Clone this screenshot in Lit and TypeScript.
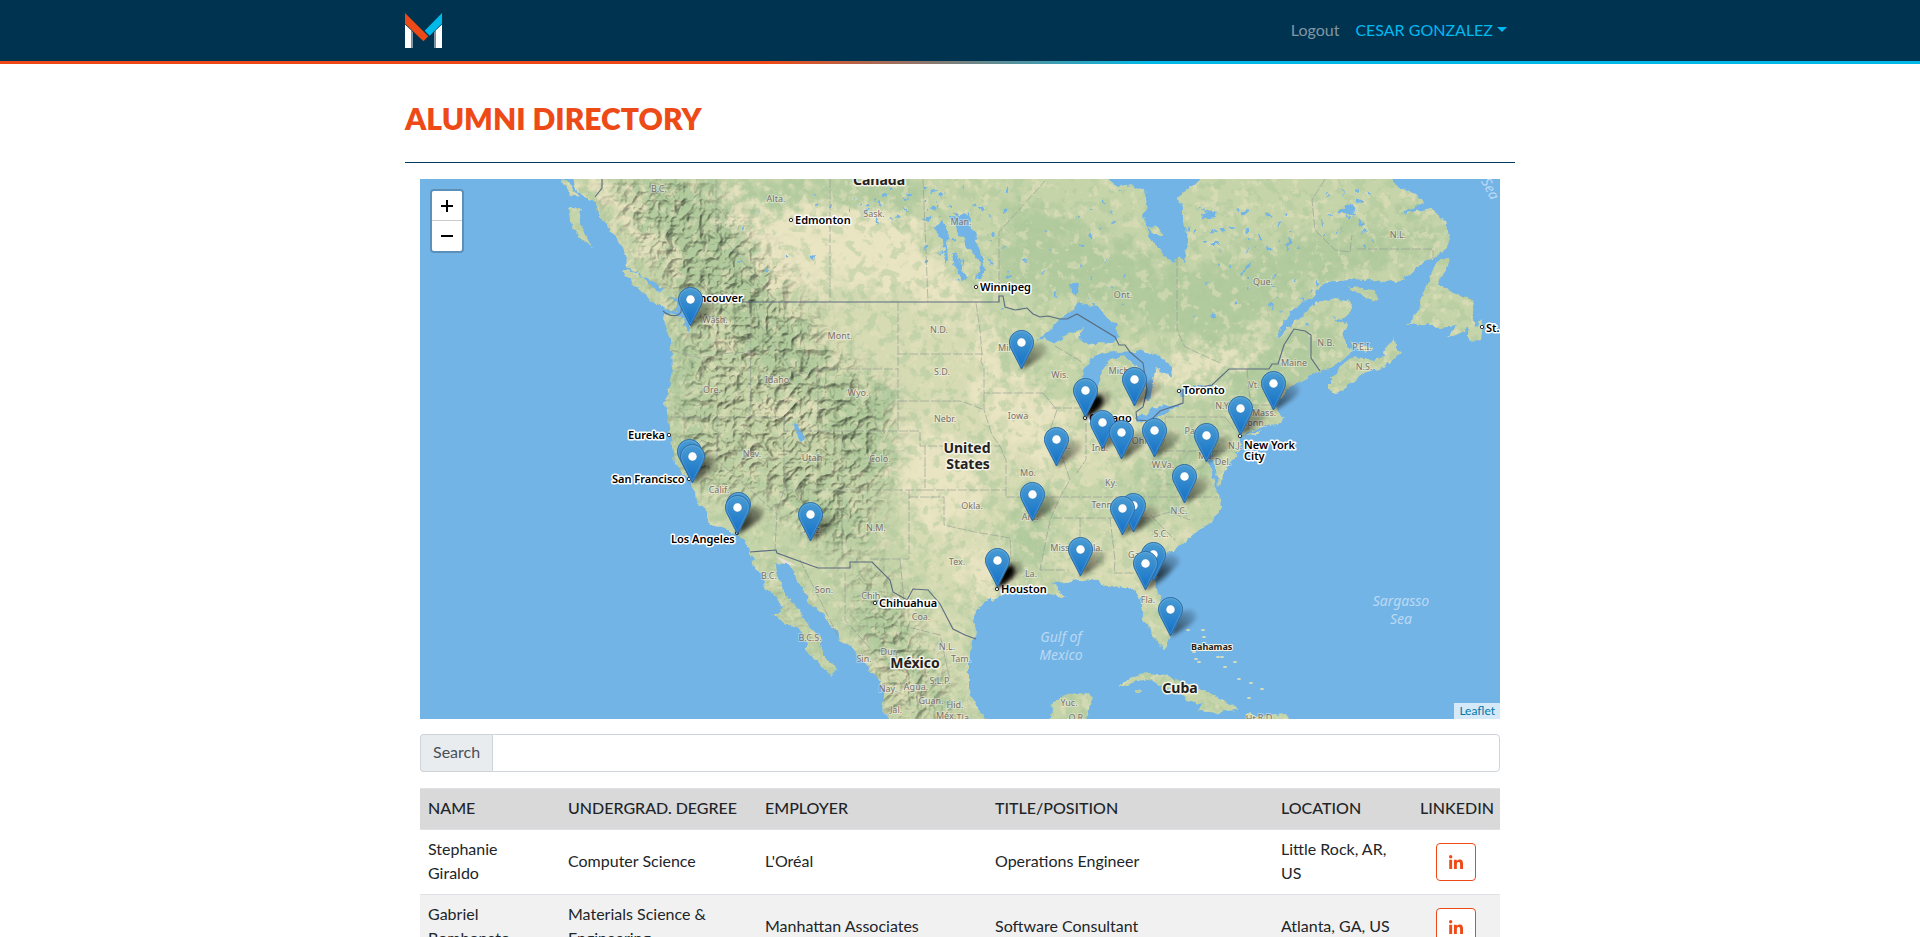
import { LitElement, html, svg, css } from "lit";
import { customElement, state } from "lit/decorators.js";

type Point = [number, number];

/* Coastlines, in map units. */
const MAINLAND =
  "M570 170 L574 186 580 196 588 198 595 204 597 212 605 222 610 231 618 238 623 249 627 258 628 267 643 277 651 281 658 284 663 293 672 296 677 299 684 302 690 312 690 326 687 334 685 322 680 317 664 313 665 327 670 338 671 350 672 370 669 387 665 403 668 420 670 436 673 447 675 463 683 473 689 480 691 486 696 493 697 502 707 513 710 525 725 528 733 533 742 538 748 547 750 553 755 567 763 578 765 588 777 597 783 607 782 613 773 614 782 622 792 627 795 624 800 630 807 643 807 652 815 658 823 668 830 676 837 671 834 665 827 660 822 650 820 637 810 627 800 613 795 603 787 597 782 588 777 573 776 564 787 565 795 570 797 580 805 593 808 602 823 613 827 622 838 630 839 638 850 647 863 662 878 678 885 693 882 707 890 725 990 725 984 716 975 703 969 687 969 663 972 640 976 630 973 622 975 612 983 603 997 598 1007 592 1023 590 1035 589 1047 593 1060 597 1067 597 1057 590 1053 583 1067 582 1080 580 1097 581 1108 587 1117 589 1127 585 1135 592 1141 603 1142 617 1147 627 1157 643 1165 648 1169 643 1170 633 1163 617 1160 597 1155 580 1158 566 1164 555 1177 548 1193 535 1203 527 1213 522 1216 515 1222 507 1220 497 1215 487 1212 473 1208 462 1212 452 1216 470 1218 487 1224 474 1229 466 1233 458 1240 450 1240 437 1250 432 1265 425 1278 424 1286 419 1280 415 1276 409 1278 402 1284 396 1287 390 1300 382 1317 372 1330 368 1342 361 1351 352 1347 344 1343 337 1347 323 1340 322 1332 317 1343 319 1350 313 1351 306 1347 301 1337 298 1317 303 1297 320 1277 338 1282 324 1290 313 1303 302 1313 296 1318 288 1327 282 1350 280 1385 282 1402 280 1417 267 1433 258 1447 248 1449 235 1446 221 1437 214 1430 208 1402 214 1425 202 1416 194 1404 190 1395 184 1390 170 1210 170 1198 182 1177 197 1183 208 1183 222 1188 240 1185 263 1180 257 1172 263 1157 246 1150 238 1144 216 1147 206 1145 190 1130 184 1117 187 1106 178 1100 170 Z";

const ISLANDS = [
  "M622 272 L628 269 643 278 655 289 667 293 677 303 677 312 665 309 650 299 637 288Z",
  "M568 208 L583 209 580 217 582 228 592 248 577 233 570 220Z",
  "M561 180 L569 182 575 192 579 197 570 194Z",
  "M580 180 L588 182 590 192 583 188Z",
  "M1330 378 L1345 362 1356 357 1372 359 1384 357 1383 351 1390 343 1395 337 1396 348 1401 353 1392 361 1383 368 1363 373 1350 384 1337 393 1330 390Z",
  "M1349 339 L1354 343 1365 345 1375 348 1367 352 1357 349Z",
  "M1347 287 L1363 288 1375 293 1380 301 1370 299 1356 293Z",
  "M1450 257 L1440 258 1430 275 1427 285 1420 300 1417 311 1407 325 1425 324 1440 327 1457 325 1447 337 1465 331 1468 326 1468 340 1474 342 1480 340 1483 320 1476 326 1472 317 1475 303 1467 297 1450 292 1438 285 1441 276 1448 267Z",
  "M1117 688 L1130 678 1147 673 1167 675 1183 684 1200 689 1217 696 1238 709 1220 713 1198 711 1202 704 1187 700 1176 691 1163 687 1150 680 1133 683Z",
  "M1134 690 L1143 690 1141 693 1136 693Z",
  "M1050 725 L1053 702 1067 695 1090 693 1093 698 1089 708 1087 725Z",
  "M1246 714 L1262 716 1286 714 1290 725 1246 725Z",
  "M1242 437 L1262 430 1258 434Z",
  "M1147 228 L1155 227 1163 233 1162 236 1153 233Z",
];

const BAHAMAS: Point[] = [
  [1188, 630], [1203, 630], [1204, 637], [1194, 652], [1196, 659], [1199, 662], [1222, 657],
  [1225, 667], [1235, 662], [1239, 679], [1251, 683], [1249, 698], [1262, 689], [1218, 657],
];

const LAKES = [
  "M1035 342 L1048 332 1067 313 1078 304 1098 307 1106 318 1115 323 1118 337 1113 343 1097 342 1090 345 1078 337 1083 328 1067 336 1053 342 1045 338Z",
  "M1082 378 L1083 370 1090 360 1100 354 1115 352 1128 356 1118 357 1108 362 1102 371 1098 387 1096 402 1088 407 1083 398Z",
  "M1117 352 L1135 351 1160 355 1172 367 1173 378 1163 371 1156 368 1152 383 1149 400 1143 398 1147 383 1142 370 1127 358Z",
  "M1137 422 L1136 416 1145 416 1153 408 1183 403 1170 411 1150 421Z",
  "M1176 391 L1183 387 1198 385 1212 386 1207 392 1190 394 1183 397Z",
  "M948 217 L967 214 970 228 976 232 978 247 983 260 985 270 982 278 978 278 981 264 974 252 967 247 962 237 957 232 956 223Z",
  "M933 228 L942 222 948 230 947 245 948 260 945 264 943 240Z",
  "M952 253 L958 257 961 267 967 278 962 281 958 270 953 263Z",
  "M792 424 L798 425 801 431 804 438 800 441 796 433Z",
  "M1070 284 L1076 280 1080 286 1078 294 1071 293Z",
  "M1241 275 L1247 264 1253 261 1246 270 1242 277Z",
  "M1338 212 L1346 206 1353 203 1357 212 1350 214 1342 213Z",
  "M1201 214 L1212 208 1218 213 1210 219 1202 219Z",
  "M716 577 L720 574 722 580 717 583Z",
];

const BORDERS = [
  "M690 302 L999 302 999 296 1003 296 1005 307 1015 310 1027 308 1033 314 1040 317 1048 316 1060 319 1067 319 1077 314 1115 337 1119 345 1125 345 1130 352 1143 363 1147 390 1143 407 1136 412 1137 420 1150 421 1160 411 1183 403 1183 390 1212 385 1229 369 1269 369 1272 364 1278 364 1284 345 1294 329 1305 331 1311 335 1311 358 1320 371",
  "M663 311 C670 317 678 317 681 312 L682 302",
  "M750 552 L776 550 777 553 818 568 850 568 850 562 872 562 890 580 893 592 907 600 913 589 928 590 940 604 953 629 965 635 976 639",
  "M602 179 L602 188 595 197",
];

const STATE_LINES =
  "M898 302V431M898 354H983M976 303L980 330 982 354 981 362 984 368V393H1043M898 401H960L975 406 984 410M984 393L984 410 992 435 1000 446 1006 460V497M818 369V431H920V446H1000M818 369H898M842 431V559M784 490H925M842 497M671 417H784V490M784 490L777 512 775 550M717 417V460L778 515M751 303V320L750 417M671 350L700 358 730 353 751 352M755 302L760 325 785 360 795 375 818 370M784 417V431H818M925 446V490H1006M909 490V559H869M909 497H944V525L975 532 1010 538 1012 580M1006 497H1060M1060 497H1218M1053 518H1150L1170 512 1190 520M1043 393L1057 410 1050 430 1060 450 1070 480 1060 497 1050 520 1045 545 1040 570H1068M1080 518V577M1110 518L1115 560 1114 573H1155M1052 408H1080M1086 412V460L1075 475M1118 428V455M1165 417H1225M1165 451H1225M1165 417V440L1150 465M1247 369L1250 400 1248 430M1250 405H1275M1225 417L1235 430M1150 515L1175 540M716 179V230L775 300M830 179V302M923 179L928 302M999 302V232L1045 181M1177 257V330L1185 347 1220 363M1357 249H1433V258M1055 346L1082 362M1325 179L1312 200 1315 230 1335 250 1350 252 1352 235M800 560L840 640M900 625L940 635 950 680M845 572V620L880 660M900 560L905 610";

const FOREST = [
  "640,179 716,179 790,300 730,310 690,300 640,250",
  "720,302 800,320 830,400 770,380 730,340",
  "1010,200 1180,270 1290,240 1430,215 1440,245 1300,290 1220,350 1130,320 1060,290 1000,290",
  "1280,330 1330,320 1340,360 1240,420 1220,380",
  "1130,500 1200,430 1230,400 1200,470 1140,520",
  "675,330 700,320 700,480 685,470",
  "835,430 890,440 885,480 845,480",
  "1020,500 1050,480 1050,560 1010,560",
  "830,380 895,390 890,430 830,430",
  "785,470 860,520 860,550 800,510",
  "870,590 960,700 930,700 850,620",
  "1070,700 1090,695 1085,719 1065,719",
  "740,179 920,179 920,215 830,195 760,215",
];
const DRY = [
  "770,215 830,205 905,215 960,290 990,330 1010,380 1060,410 1075,460 1010,450 980,400 970,320 900,290 790,290",
  "885,430 960,440 985,490 940,540 910,500 900,460",
  "700,330 745,340 730,360 700,350",
  "745,400 800,400 815,420 780,420",
  "695,490 735,520 715,510",
  "1150,370 1230,350 1290,330 1240,370 1180,385 1130,410",
  "575,180 610,180 680,270 665,275",
  "965,540 1010,560 985,600 970,600",
  "1140,610 1165,640 1150,630",
  "770,210 710,190 780,300 800,300",
];
const STEPPE = [
  "785,300 980,300 990,500 1020,560 940,600 900,540 890,400 800,360",
  "990,400 1140,400 1150,450 1060,500 1000,500",
  "1040,540 1200,520 1150,600 1060,590",
  "840,640 960,600 970,700 900,719",
];
const MOUNTAINS = [
  "600,179 700,179 800,300 830,350 890,400 880,480 860,560 820,540 760,490 700,490 680,430 690,330",
  "850,570 880,570 960,719 890,719",
  "1150,500 1210,430 1230,410 1170,490",
  "760,550 800,610 830,670 790,620",
];

/* Regional labels: [text, x, y] with x at the text's centre. */
const REGIONS: [string, number, number][] = [
  ["B.C.", 659, 192], ["Alta.", 776, 202], ["Sask.", 874, 217], ["Man.", 961, 225], ["Ont.", 1123, 298],
  ["Que.", 1263, 285], ["N.L.", 1398, 238], ["N.B.", 1326, 346], ["P.E.I.", 1362, 350], ["N.S.", 1364, 370],
  ["Maine", 1294, 366], ["Vt.", 1254, 388], ["N.Y.", 1223, 409], ["Mass.", 1264, 416], ["Conn.", 1254, 426],
  ["N.J.", 1235, 449], ["Pa.", 1191, 434], ["Del.", 1223, 465], ["Md.", 1206, 459], ["Wash.", 715, 323],
  ["Ore.", 712, 393], ["Idaho", 777, 383], ["Mont.", 840, 339], ["N.D.", 939, 333], ["S.D.", 942, 375],
  ["Wyo.", 858, 396], ["Nebr.", 945, 422], ["Iowa", 1018, 419], ["Minn.", 1010, 351], ["Wis.", 1060, 378],
  ["Mich.", 1120, 374], ["Ill.", 1065, 449], ["Ind.", 1100, 451], ["Ohio", 1142, 444], ["W.Va.", 1163, 468],
  ["Nev.", 752, 457], ["Utah", 812, 461], ["Colo.", 880, 462], ["Mo.", 1028, 476], ["Ky.", 1111, 486],
  ["Calif.", 719, 493], ["Ariz.", 813, 533], ["N.M.", 876, 531], ["Okla.", 972, 509], ["Ark.", 1030, 520],
  ["Tenn.", 1103, 508], ["N.C.", 1179, 514], ["S.C.", 1161, 537], ["Miss.", 1061, 551], ["Ala.", 1095, 551],
  ["Ga.", 1135, 558], ["Tex.", 957, 565], ["La.", 1031, 577], ["Fla.", 1148, 603], ["B.C.", 769, 579],
  ["Son.", 824, 593], ["Chih.", 872, 599], ["Coa.", 921, 620], ["B.C.S.", 810, 641], ["Sin.", 864, 662],
  ["Dur.", 889, 655], ["N.L.", 947, 650], ["Tam.", 961, 662], ["Nay.", 888, 692], ["Agua.", 916, 690],
  ["S.L.P.", 940, 684], ["Guan.", 931, 704], ["Hid.", 955, 708], ["Jal.", 896, 713], ["Méx.", 946, 719],
  ["Tla.", 964, 721], ["Yuc.", 1069, 706], ["Q.R.", 1077, 721], ["Ht.", 1252, 722], ["R.D.", 1266, 721],
];

/* Cities: [text, x, y, dot x, dot y] with x at the text's left edge. */
const CITIES: [string, number, number, number, number][] = [
  ["Edmonton", 795, 224, 791, 220], ["Winnipeg", 980, 291, 976, 287], ["Vancouver", 686, 302, 682, 298],
  ["Toronto", 1183, 394, 1179, 391], ["St.", 1486, 332, 1482, 327], ["Eureka", 628, 439, 669, 435],
  ["San Francisco", 612, 483, 689, 479], ["Los Angeles", 671, 543, 737, 533], ["Chicago", 1089, 422, 1085, 418],
  ["New York", 1244, 449, 1240, 436], ["Houston", 1001, 593, 997, 589], ["Chihuahua", 879, 607, 875, 603],
];

/* Alumni pins: [centre x, top y, alumni at the spot], drawn north to south. */
const PINS: [number, number, number][] = [
  [690, 287, 1], [1021, 330, 1], [1134, 367, 1], [1273, 371, 1], [1085, 378, 4], [1240, 396, 1],
  [1102, 410, 1], [1154, 418, 1], [1121, 420, 2], [1206, 423, 1], [1056, 427, 1], [689, 439, 1],
  [692, 444, 1], [1184, 464, 1], [1032, 482, 1], [738, 492, 1], [1133, 493, 1], [737, 495, 1],
  [1122, 496, 1], [810, 502, 1], [1080, 537, 1], [1153, 542, 1], [997, 548, 4], [1145, 551, 1],
  [1170, 597, 1],
];

/** Small northern lakes, scattered by a fixed generator so that the map is stable. */
function ponds(): { x: number; y: number; rx: number; ry: number; a: number }[] {
  let seed = 7;
  const next = () => (seed = (seed * 16807) % 2147483647) / 2147483647;
  const areas: [number, number, number, number, number][] = [
    [830, 182, 150, 40, 34], [925, 200, 70, 80, 26], [1000, 190, 130, 120, 30],
    [1185, 200, 120, 50, 26], [1190, 240, 130, 90, 24], [1320, 190, 60, 60, 20], [730, 190, 90, 100, 8],
  ];
  return areas.flatMap(([x, y, w, h, n]) =>
    Array.from({ length: n }, () => ({
      x: x + next() * w, y: y + next() * h, rx: 0.8 + next() * 2.6, ry: 0.6 + next() * 1, a: next() * 180 - 90,
    })),
  );
}
const PONDS = ponds();

@customElement("alumni-map")
class AlumniMap extends LitElement {
  static styles = css`
    :host { display: block; position: relative; height: 540px; overflow: hidden; background: #73b4e6; }
    .chart { display: block; width: 100%; height: 100%; }
    text { font-family: "Noto Sans", sans-serif; paint-order: stroke; stroke-linejoin: round; }
    .region { font-size: 9px; fill: #7d7268; stroke: rgba(255, 255, 255, 0.4); stroke-width: 2px; text-anchor: middle; }
    .city { font-size: 11px; font-weight: 600; fill: #000; stroke: #fff; stroke-width: 3px; }
    .isle { font-size: 9px; font-weight: 700; fill: #222; stroke: #f4f4e4; stroke-width: 2px; }
    .country { font-size: 14px; font-weight: 700; fill: #222; stroke: #f6f4e6; stroke-width: 3px; text-anchor: middle; }
    .sea { font-size: 14px; font-style: italic; fill: #b9d9f4; text-anchor: middle; }
    .relief { mix-blend-mode: multiply; }
    .zoom {
      position: absolute; top: 10px; left: 10px; display: flex; flex-direction: column;
      border: 2px solid rgba(0, 0, 0, 0.2); border-radius: 4px; background-clip: padding-box;
    }
    .zoom button {
      box-sizing: border-box; width: 30px; height: 30px; padding: 0; border: 0; background: #fff; color: #000;
      display: grid; place-items: center; cursor: pointer;
    }
    .zoom button:first-child { border-bottom: 1px solid #ccc; border-radius: 2px 2px 0 0; }
    .zoom button:last-child { border-radius: 0 0 2px 2px; }
    .credit {
      position: absolute; right: 0; bottom: 0; padding: 0 5px; background: rgba(255, 255, 255, 0.7);
      font: 12px/16px Lato, "Open Sans", sans-serif; color: #0078a8; text-decoration: none;
    }
  `;

  render() {
    const land = svg`<path d=${MAINLAND}></path>${ISLANDS.map((d) => svg`<path d=${d}></path>`)}`;
    const areas = (list: string[]) => list.map((p) => svg`<polygon points=${p}></polygon>`);
    return html`
      <svg class="chart" viewBox="420 179 1080 540" preserveAspectRatio="xMidYMid slice" role="img" aria-label="Map of alumni in North America">
        <defs>
          <filter id="rough" x="0" y="0" width="1" height="1">
            <feTurbulence type="fractalNoise" baseFrequency="0.13" numOctaves="3" seed="4"></feTurbulence>
            <feDisplacementMap in="SourceGraphic" scale="7" xChannelSelector="R" yChannelSelector="G"></feDisplacementMap>
          </filter>
          <filter id="soft" filterUnits="userSpaceOnUse" x="400" y="160" width="1120" height="580" color-interpolation-filters="sRGB">
            <feGaussianBlur stdDeviation="7" result="b"></feGaussianBlur>
            <feTurbulence type="fractalNoise" baseFrequency="0.06" numOctaves="5" seed="9" result="t"></feTurbulence>
            <feDisplacementMap in="b" in2="t" scale="70" xChannelSelector="R" yChannelSelector="G"></feDisplacementMap>
          </filter>
          <filter id="leaf" filterUnits="userSpaceOnUse" x="420" y="179" width="1080" height="540" color-interpolation-filters="sRGB">
            <feTurbulence type="fractalNoise" baseFrequency="0.09" numOctaves="5" seed="21"></feTurbulence>
            <feColorMatrix values="0 0 0 0 0.68  0 0 0 0 0.785  0 0 0 0 0.61  9 0 0 0 -4.7"></feColorMatrix>
          </filter>
          <filter id="sand" filterUnits="userSpaceOnUse" x="420" y="179" width="1080" height="540" color-interpolation-filters="sRGB">
            <feTurbulence type="fractalNoise" baseFrequency="0.1" numOctaves="5" seed="33"></feTurbulence>
            <feColorMatrix values="0 0 0 0 0.9  0 0 0 0 0.885  0 0 0 0 0.75  9 0 0 0 -5.2"></feColorMatrix>
          </filter>
          <filter id="relief" filterUnits="userSpaceOnUse" x="420" y="179" width="1080" height="540" color-interpolation-filters="sRGB">
            <feTurbulence type="turbulence" baseFrequency="0.06" numOctaves="3" seed="5" result="n"></feTurbulence>
            <feColorMatrix in="n" values="0 0 0 0 0  0 0 0 0 0  0 0 0 0 0  -1 0 0 0 1"></feColorMatrix>
            <feDiffuseLighting surfaceScale="5" diffuseConstant="1.16" lighting-color="#fffdf4">
              <feDistantLight azimuth="225" elevation="60"></feDistantLight>
            </feDiffuseLighting>
          </filter>
          <filter id="haze" x="-20%" y="-20%" width="140%" height="140%"><feGaussianBlur stdDeviation="16"></feGaussianBlur></filter>
          <filter id="shade" x="-50%" y="-50%" width="200%" height="200%"><feGaussianBlur stdDeviation="2"></feGaussianBlur></filter>
          <mask id="land" maskUnits="userSpaceOnUse" x="400" y="160" width="1120" height="580">
            <g fill="#fff" filter="url(#rough)">${land}</g>
          </mask>
          <mask id="peaks" maskUnits="userSpaceOnUse" x="400" y="160" width="1120" height="580">
            <g fill="#999" filter="url(#haze)">${areas(MOUNTAINS)}</g>
          </mask>
          <linearGradient id="pin" x1="0" y1="0" x2="0" y2="1">
            <stop offset="0" stop-color="#4a9cd3"></stop><stop offset="1" stop-color="#126fc6"></stop>
          </linearGradient>
          <linearGradient id="fall" x1="0" y1="1" x2="0.8" y2="0">
            <stop offset="0" stop-color="#000" stop-opacity="0.85"></stop><stop offset="1" stop-color="#000" stop-opacity="0.15"></stop>
          </linearGradient>
        </defs>

        <g mask="url(#land)">
          <rect x="400" y="160" width="1120" height="580" fill="#c6d4aa"></rect>
          <g filter="url(#soft)">
            <g fill="#d6dbb4">${areas(STEPPE)}</g>
            <g fill="#b1ca9e">${areas(FOREST)}</g>
            <g fill="#e9e4c2">${areas(DRY)}</g>
          </g>
          <rect x="420" y="179" width="1080" height="540" filter="url(#leaf)" opacity="0.45"></rect>
          <rect x="420" y="179" width="1080" height="540" filter="url(#sand)" opacity="0.5"></rect>
          <g class="relief" mask="url(#peaks)">
            <rect x="420" y="179" width="1080" height="540" filter="url(#relief)"></rect>
          </g>
          <path d="M776 556 L792 563 796 566 784 564Z" fill="#e6dfd4"></path>
        </g>
        <g fill="#73b4e6" filter="url(#rough)">
          ${LAKES.map((d) => svg`<path d=${d}></path>`)}
          ${PONDS.map((p) => svg`<ellipse cx=${p.x} cy=${p.y} rx=${p.rx} ry=${p.ry} transform="rotate(${p.a} ${p.x} ${p.y})"></ellipse>`)}
        </g>
        <g fill="#dfe0b8">${BAHAMAS.map(([x, y]) => svg`<ellipse cx=${x} cy=${y} rx="2" ry="0.9"></ellipse>`)}</g>

        <path d=${STATE_LINES} fill="none" stroke="#8f968f" stroke-opacity="0.65" stroke-dasharray="9 2" stroke-width="0.9"></path>
        <g fill="none" stroke="#5c6c80" stroke-width="1.1">${BORDERS.map((d) => svg`<path d=${d}></path>`)}</g>

        ${REGIONS.map(([t, x, y]) => svg`<text class="region" x=${x} y=${y}>${t}</text>`)}
        ${CITIES.map(([t, x, y, cx, cy]) => svg`
          <circle cx=${cx} cy=${cy} r="1.7" fill="#fff" stroke="#333"></circle>
          <text class="city" x=${x} y=${y}>${t}</text>`)}
        <text class="city" x="1244" y="460">City</text>
        <text class="isle" x="1191" y="650">Bahamas</text>
        <text class="country" x="879" y="185">Canada</text>
        <text class="country" x="967" y="453">United</text>
        <text class="country" x="968" y="469">States</text>
        <text class="country" x="915" y="668">México</text>
        <text class="country" x="1180" y="693">Cuba</text>
        <text class="sea" x="1061" y="642">Gulf of</text>
        <text class="sea" x="1061" y="660">Mexico</text>
        <text class="sea" x="1401" y="606">Sargasso</text>
        <text class="sea" x="1401" y="624">Sea</text>
        <text class="sea" x="1486" y="191" transform="rotate(62 1486 191)">Sea</text>

        ${PINS.map(([x, y, n]) => svg`
          <path transform="translate(${x - 12} ${y})" d="M12 40 L19 20 C23 12 35 10 38 17 C40 24 28 31 12 40Z"
            fill="url(#fall)" filter="url(#shade)" opacity=${Math.min(1, 0.7 + n * 0.1)}></path>
          ${n > 2 ? svg`<path transform="translate(${x - 12} ${y})" d="M12 40 L19 22 C24 15 29 17 30 22 C30 28 22 34 12 40Z" fill="#000" filter="url(#shade)"></path>` : ""}`)}
        ${PINS.map(([x, y]) => svg`
          <g transform="translate(${x - 12} ${y})">
            <path d="M12.5 0.5C5.9 0.5 0.5 5.9 0.5 12.4C0.5 15 1.3 17.2 2.6 19.7L12.5 39L22.4 19.7C23.7 17.2 24.5 15 24.5 12.4C24.5 5.9 19.1 0.5 12.5 0.5Z" fill="url(#pin)" stroke="#2e6ea5"></path>
            <path d="M12.5 1.6C6.5 1.6 1.6 6.5 1.6 12.4C1.6 14.8 2.4 16.8 3.6 19.2L12.5 36.6L21.4 19.2C22.6 16.8 23.4 14.8 23.4 12.4C23.4 6.5 18.5 1.6 12.5 1.6Z" fill="none" stroke="#fff" stroke-opacity="0.14"></path>
            <circle cx="12.5" cy="12.5" r="4.4" fill="#fff" stroke="#2e6ea5" stroke-opacity="0.5" stroke-width="0.6"></circle>
          </g>`)}
      </svg>
      <div class="zoom">
        <button type="button" aria-label="Zoom in">
          <svg width="12" height="12" viewBox="0 0 12 12"><path d="M0 6H12M6 0V12" stroke="#000" stroke-width="2"></path></svg>
        </button>
        <button type="button" aria-label="Zoom out">
          <svg width="12" height="12" viewBox="0 0 12 12"><path d="M0 6H12" stroke="#000" stroke-width="2"></path></svg>
        </button>
      </div>
      <a class="credit" href="#leaflet">Leaflet</a>
    `;
  }
}

interface Alumnus { name: string; degree: string; employer: string; title: string; location: string; }

const ALUMNI: Alumnus[] = [
  { name: "Stephanie Giraldo", degree: "Computer Science", employer: "L'Oréal", title: "Operations Engineer", location: "Little Rock, AR, US" },
  { name: "Gabriel Bombonato", degree: "Materials Science & Engineering", employer: "Manhattan Associates", title: "Software Consultant", location: "Atlanta, GA, US" },
];

@customElement("app-root")
class AppRoot extends LitElement {
  @state() private query = "";

  static styles = css`
    :host { display: block; background: #fff; color: #212529; font: 16px/24px Lato, "Open Sans", sans-serif; }
    * { box-sizing: border-box; }
    a { text-decoration: none; }
    .bar { background: #00334f; }
    .bar::after { content: ""; display: block; height: 3px; background: linear-gradient(90deg, #ee4a17 40%, #00b9e8 60%); }
    .wrap { max-width: 1110px; margin: 0 auto; }
    .nav { display: flex; align-items: center; justify-content: space-between; height: 61px; }
    .logo { display: block; }
    .links { display: flex; gap: 16px; padding: 0 8px 2px 0; }
    .links a { color: #8096a3; }
    .links button { display: flex; align-items: center; gap: 4px; padding: 0; border: 0; background: none; font: inherit; color: #00b9f2; cursor: pointer; }
    .caret { border: 5px solid transparent; border-top-color: currentColor; border-bottom: 0; }
    h1 { margin: 0; padding: 36px 0 26px; font-size: 30px; line-height: 36px; font-weight: 800; color: #ee4a17; text-transform: uppercase; border-bottom: 1px solid #003a5d; }
    .body { padding: 16px 15px 0; }
    .search { display: flex; height: 38px; margin: 15px 0 16px; }
    .search label { padding: 5px 12px 7px; border: 1px solid #ced4da; border-right: 0; border-radius: 4px 0 0 4px; background: #e9ecef; color: #495057; }
    .search input { flex: 1; min-width: 0; padding: 6px 12px; border: 1px solid #ced4da; border-radius: 0 4px 4px 0; font: inherit; color: #495057; outline: 0; }
    table { width: 100%; table-layout: fixed; border-collapse: separate; border-spacing: 0; }
    th, td { padding: 7px 8px 9px; border-top: 1px solid #dee2e6; text-align: left; vertical-align: middle; }
    th { font-weight: 500; background: #d9d9d9; text-transform: uppercase; white-space: nowrap; }
    tbody tr:nth-child(even) { background: #f1f1f1; }
    .name { width: 140px; }
    .degree { width: 197px; }
    .employer { width: 230px; }
    .location { width: 139px; }
    .linkedin { width: 88px; }
    .action { padding: 8px; }
    .profile { display: grid; place-items: center; width: 40px; height: 38px; margin: 0 auto; border: 1px solid #ee4a17; border-radius: 4px; background: #fff; }
  `;

  render() {
    const q = this.query.toLowerCase();
    const rows = ALUMNI.filter((a) => Object.values(a).join(" ").toLowerCase().includes(q));
    return html`
      <header class="bar">
        <nav class="wrap nav">
          <a class="logo" href="#home" aria-label="Home">
            <svg class="logo" width="37" height="35" viewBox="0 0 37 35">
              <path d="M0 11.5L6.4 17.6V35H0Z M37 11.5L30.6 17.6V35H37Z" fill="#fff"></path>
              <path d="M6.4 17.6L8 19.2V35H6.4Z M30.6 17.6L29 19.2V35H30.6Z" fill="#7f99a7"></path>
              <path d="M37 0V10.4L24.6 22.8L19.6 17.8Z" fill="#00b9e8"></path>
              <path d="M0 0L23.3 23.3L18.4 28.3L0 10.4Z" fill="#ee4a17"></path>
            </svg>
          </a>
          <div class="links">
            <a href="#logout">Logout</a>
            <button type="button">CESAR GONZALEZ<span class="caret"></span></button>
          </div>
        </nav>
      </header>
      <main class="wrap">
        <h1>Alumni Directory</h1>
        <div class="body">
          <alumni-map></alumni-map>
          <div class="search">
            <label for="search">Search</label>
            <input id="search" type="text" .value=${this.query} @input=${(e: InputEvent) => (this.query = (e.target as HTMLInputElement).value)} />
          </div>
          <table>
            <thead>
              <tr>
                <th class="name">Name</th><th class="degree">Undergrad. Degree</th><th class="employer">Employer</th>
                <th>Title/Position</th><th class="location">Location</th><th class="linkedin">LinkedIn</th>
              </tr>
            </thead>
            <tbody>
              ${rows.map((a) => html`
                <tr>
                  <td>${a.name}</td><td>${a.degree}</td><td>${a.employer}</td><td>${a.title}</td><td>${a.location}</td>
                  <td class="action">
                    <a class="profile" href="#linkedin" aria-label="LinkedIn profile of ${a.name}">
                      <svg width="14" height="14" viewBox="0 0 448 448" fill="#ee4a17">
                        <path d="M100.3 448H7.4V148.9h92.9zM53.8 108.1C24.1 108.1 0 83.5 0 53.8a53.8 53.8 0 0 1 107.6 0c0 29.7-24.1 54.3-53.8 54.3zM447.9 448h-92.7V302.4c0-34.7-.7-79.2-48.3-79.2-48.3 0-55.7 37.7-55.7 76.7V448h-92.8V148.9h89.1v40.8h1.3c12.4-23.5 42.7-48.3 87.9-48.3 94 0 111.3 61.9 111.3 142.3V448z"></path>
                      </svg>
                    </a>
                  </td>
                </tr>`)}
            </tbody>
          </table>
        </div>
      </main>
    `;
  }
}
